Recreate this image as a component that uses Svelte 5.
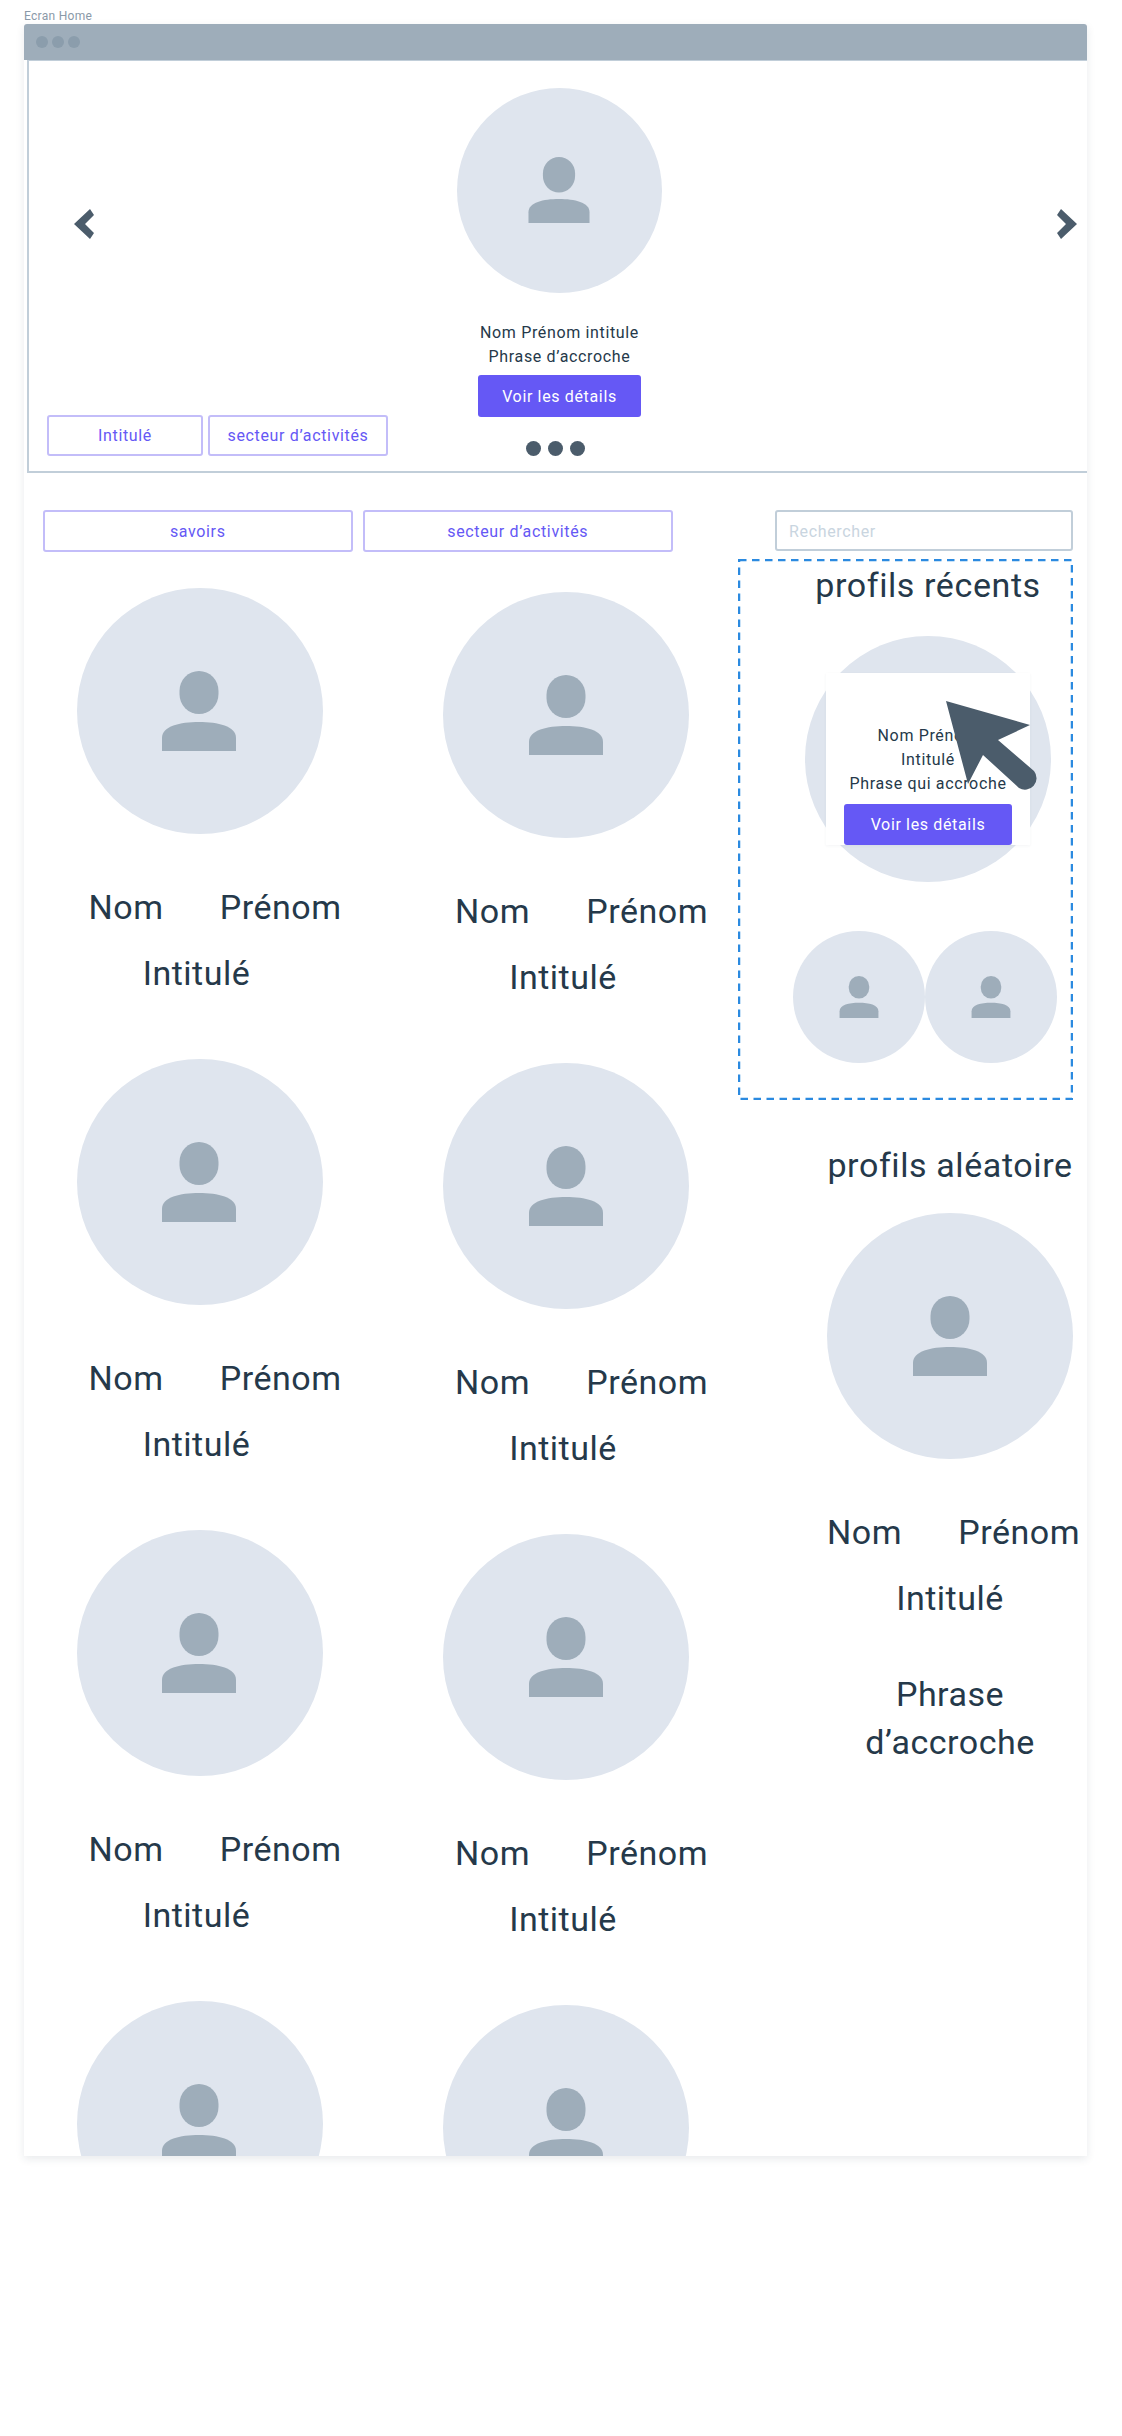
<script>
  // last row is cut by the artboard, only the avatars show
  const rows = [true, true, true, false];
</script>

{#snippet person(cls)}
  <svg class="person {cls}" viewBox="0 0 74 80" aria-hidden="true">
    <rect x="17.5" y="0" width="39" height="43" rx="19.5" ry="20" />
    <path d="M0 80V67C0 55 18 51 37 51S74 55 74 67V80Z" />
  </svg>
{/snippet}

{#snippet chevron(flip)}
  <svg class="chevron" class:flip viewBox="0 0 20 30" aria-hidden="true">
    <polygon points="0,15 16,0 20,6 11,15 20,24 16,30" />
  </svg>
{/snippet}

{#snippet card(full)}
  <div class="card">
    <div class="avatar big">{@render person("p-big")}</div>
    {#if full}
      <div class="names"><span>Nom</span><span>Prénom</span></div>
      <div class="job">Intitulé</div>
    {/if}
  </div>
{/snippet}

<div class="page">
  <div class="label">Ecran Home</div>
  <div class="window">
    <div class="titlebar">
      <i></i><i></i><i></i>
    </div>

    <section class="hero">
      <div class="hero-left">
        {@render chevron(false)}
        <div class="tags">
          <button class="tag t1">Intitulé</button>
          <button class="tag t2">secteur d’activités</button>
        </div>
      </div>
      <div class="hero-mid">
        <div class="avatar hero-avatar">{@render person("p-hero")}</div>
        <p class="hero-text">Nom Prénom intitule<br />Phrase d’accroche</p>
        <button class="primary hero-btn">Voir les détails</button>
        <div class="dots"><i></i><i></i><i></i></div>
      </div>
      <div class="hero-right">{@render chevron(true)}</div>
    </section>

    <div class="main">
      <div class="left">
        <div class="filters">
          <button class="tag filter">savoirs</button>
          <button class="tag filter">secteur d’activités</button>
        </div>
        <div class="grid">
          {#each rows as full}
            {@render card(full)}
            <div class="shifted">{@render card(full)}</div>
          {/each}
        </div>
      </div>

      <div class="right">
        <input class="search" placeholder="Rechercher" />

        <div class="recent">
          <svg class="dashes" viewBox="0 0 335 541" aria-hidden="true">
            <rect x="1" y="1" width="333" height="539" />
          </svg>
          <h2>profils récents</h2>
          <div class="avatar big hover-target">
            <div class="popup">
              <p>Nom Prénom<br />Intitulé<br />Phrase qui accroche</p>
              <button class="primary popup-btn">Voir les détails</button>
            </div>
            <svg class="cursor" viewBox="0 0 92 92" aria-hidden="true">
              <path d="M0 0L84 24L52 39L88 70A11.5 11.5 0 0 1 73 87L37 54L22 83Z" />
            </svg>
          </div>
          <div class="small-row">
            <div class="avatar small">{@render person("p-small")}</div>
            <div class="avatar small">{@render person("p-small")}</div>
          </div>
        </div>

        <div class="random">
          <h2 class="random-title">profils aléatoire</h2>
          <div class="avatar big">{@render person("p-big")}</div>
          <div class="names wide"><span>Nom</span><span>Prénom</span></div>
          <div class="job center">Intitulé</div>
          <div class="phrase">Phrase<br />d’accroche</div>
        </div>
      </div>
    </div>
  </div>
</div>

<style>
  :global(body) {
    margin: 0;
    background: #fff;
  }

  .page {
    height: 2436px;
    padding: 9px 0 0 24px;
    box-sizing: border-box;
    font-family: Roboto, "Liberation Sans", sans-serif;
    color: #25394a;
  }

  .label {
    height: 15px;
    font-size: 12px;
    line-height: 14px;
    letter-spacing: 0.3px;
    color: #8a99a8;
  }

  .window {
    width: 1063px;
    height: 2132px;
    overflow: hidden;
    background: #fff;
    border-radius: 3px 3px 0 0;
    box-shadow: 0 3px 8px rgba(30, 50, 70, 0.1);
  }

  .titlebar {
    display: flex;
    align-items: center;
    gap: 4px;
    height: 36px;
    padding-left: 12px;
    background: #9eadba;
  }

  .titlebar i {
    width: 12px;
    height: 12px;
    border-radius: 50%;
    background: #8b9dac;
  }

  .hero {
    display: grid;
    grid-template-columns: 428px 205px 1fr;
    height: 413px;
    margin-left: 3px;
    box-sizing: border-box;
    border: 2px solid #c1ced9;
    border-width: 1px 0 2px 2px;
  }

  .hero-left {
    display: flex;
    flex-direction: column;
    padding: 148px 0 0 45px;
  }

  .tags {
    display: flex;
    gap: 5px;
    margin: 176px 0 0 -27px;
  }

  .tag {
    box-sizing: border-box;
    height: 41px;
    padding: 0;
    background: #fff;
    border: 2px solid #c3bdf9;
    border-radius: 3px;
    font: 16px Roboto, "Liberation Sans", sans-serif;
    letter-spacing: 0.65px;
    color: #6558f5;
  }

  .t1 {
    width: 156px;
  }

  .t2 {
    width: 180px;
  }

  .hero-mid {
    display: flex;
    flex-direction: column;
    align-items: center;
    padding-top: 27px;
  }

  .hero-right {
    display: flex;
    justify-content: flex-end;
    padding: 148px 10px 0 0;
  }

  .chevron {
    display: block;
    width: 20px;
    height: 30px;
    fill: #4b5c6b;
  }

  .flip {
    transform: scaleX(-1);
  }

  .avatar {
    display: flex;
    align-items: center;
    justify-content: center;
    flex: none;
    border-radius: 50%;
    background: #dfe5ee;
  }

  .hero-avatar {
    width: 205px;
    height: 205px;
  }

  .big {
    width: 246px;
    height: 246px;
  }

  .small {
    width: 132px;
    height: 132px;
  }

  .person {
    display: block;
    fill: #9eadba;
  }

  .p-big {
    width: 74px;
    height: 80px;
    margin-left: -1px;
  }

  .p-hero {
    width: 62px;
    height: 66px;
    margin: -1px 1px 1px 0;
  }

  .p-small {
    width: 40px;
    height: 42px;
  }

  .hero-text {
    margin: 28px 0 0;
    font-size: 16px;
    line-height: 24px;
    letter-spacing: 0.65px;
    text-align: center;
    white-space: nowrap;
  }

  .primary {
    padding: 0;
    border: none;
    border-radius: 3px;
    background: #6558f5;
    color: #fff;
    font: 16px Roboto, "Liberation Sans", sans-serif;
    letter-spacing: 0.65px;
  }

  .hero-btn {
    flex: none;
    width: 163px;
    height: 42px;
    margin-top: 6px;
  }

  .dots {
    display: flex;
    gap: 7px;
    margin: 24px 9px 0 0;
  }

  .dots i {
    width: 15px;
    height: 15px;
    border-radius: 50%;
    background: #4b5c6b;
  }

  .main {
    display: flex;
    padding-top: 37px;
  }

  .left {
    flex: none;
    width: 714px;
  }

  .filters {
    display: flex;
    gap: 10.5px;
    margin-left: 19px;
  }

  .filter {
    width: 309.5px;
    height: 42px;
  }

  .grid {
    display: grid;
    grid-template-columns: 366.5px 1fr;
    grid-auto-rows: 471px;
    margin: 35.5px 0 0 52.5px;
  }

  .shifted {
    padding-top: 4px;
  }

  .names {
    display: flex;
    justify-content: space-between;
    width: 253px;
    margin: 49px 0 0 12px;
    font-size: 34px;
    line-height: 48px;
    letter-spacing: 0.5px;
  }

  .job {
    width: 240px;
    margin-top: 18px;
    font-size: 34px;
    line-height: 48px;
    letter-spacing: 0.5px;
    text-align: center;
  }

  .right {
    flex: none;
    width: 335px;
  }

  .search {
    display: block;
    box-sizing: border-box;
    width: 298px;
    height: 41px;
    margin-left: 37px;
    padding: 1px 12px 0;
    border: 2px solid #c1ced9;
    border-radius: 3px;
    outline: none;
    font: 16px Roboto, "Liberation Sans", sans-serif;
    letter-spacing: 0.65px;
  }

  .search::placeholder {
    color: #c9d5e0;
    opacity: 1;
  }

  .recent {
    position: relative;
    box-sizing: border-box;
    height: 541px;
    margin-top: 8px;
    padding: 2px;
  }

  .dashes {
    position: absolute;
    left: 0;
    top: 0;
    width: 335px;
    height: 541px;
    fill: none;
    stroke: #2b8ae0;
    stroke-width: 2.5;
    stroke-dasharray: 7.5 5.5;
  }

  h2 {
    margin: 0;
    font-size: 34px;
    font-weight: 400;
    line-height: 48px;
    letter-spacing: 0.6px;
    text-align: center;
    white-space: nowrap;
  }

  .recent h2 {
    width: 246px;
    margin-left: 65px;
  }

  .hover-target {
    position: relative;
    margin: 27px 0 0 65px;
  }

  .popup {
    position: absolute;
    left: 21px;
    top: 36.5px;
    box-sizing: border-box;
    width: 204px;
    height: 172.5px;
    padding-top: 51.5px;
    background: #fff;
    box-shadow: 0 1px 3px rgba(30, 50, 70, 0.05);
    text-align: center;
  }

  .popup p {
    margin: 0;
    font-size: 16px;
    line-height: 24px;
    letter-spacing: 0.65px;
    white-space: nowrap;
  }

  .popup-btn {
    width: 168px;
    height: 41.5px;
    margin-top: 7.5px;
  }

  .cursor {
    position: absolute;
    left: 141px;
    top: 65px;
    width: 92px;
    height: 92px;
    fill: #4b5c6b;
  }

  .small-row {
    display: flex;
    margin: 49px 0 0 53px;
  }

  .random {
    margin: 40.5px 0 0 89px;
  }

  .random-title {
    width: 246px;
    margin-bottom: 24px;
  }

  .wide {
    width: 253px;
    margin-left: 0;
  }

  .center {
    width: 246px;
  }

  .phrase {
    width: 246px;
    margin-top: 48px;
    font-size: 34px;
    line-height: 48px;
    letter-spacing: 0.5px;
    text-align: center;
  }
</style>
